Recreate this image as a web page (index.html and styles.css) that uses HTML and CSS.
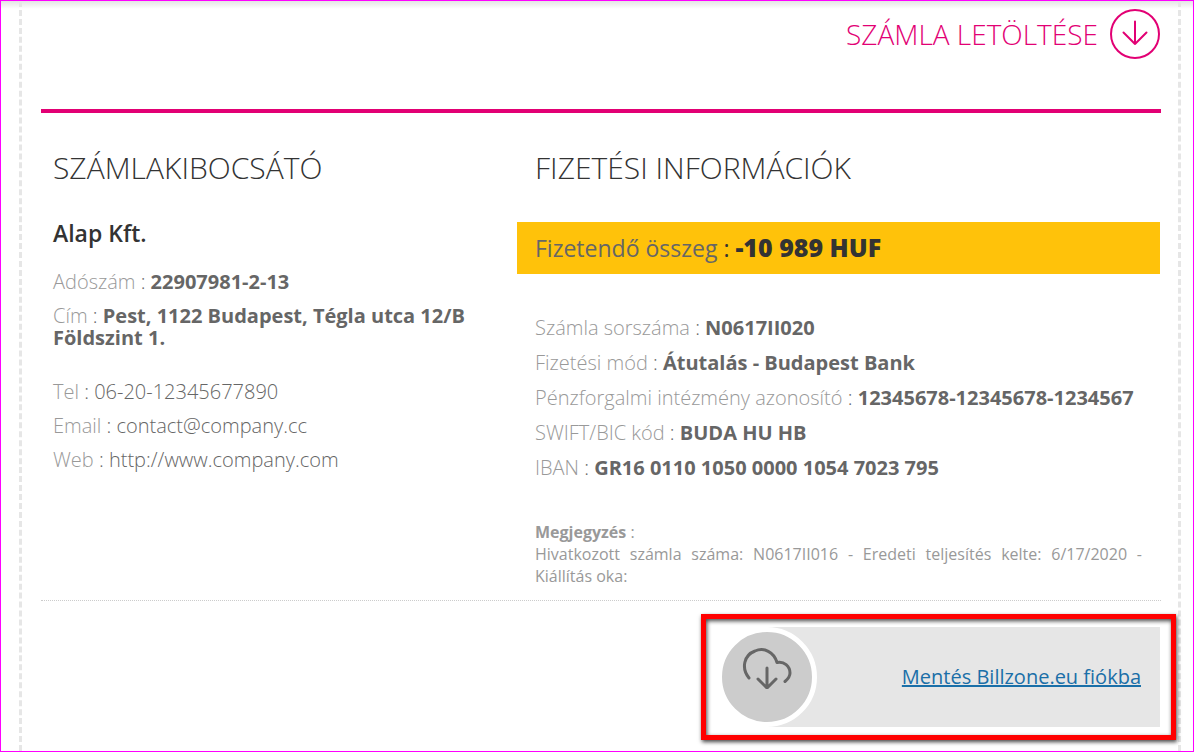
FILE: index.html
```
<!DOCTYPE html>
<html lang="hu">
<head>
  <meta charset="UTF-8">
  <meta name="viewport" content="width=device-width, initial-scale=1.0">
  <title>Számla</title>
  <link rel="stylesheet" href="styles.css">
</head>
<body>
  <div class="frame">
    <main class="sheet">
      <header class="download-bar">
        <a class="download-link" href="#letoltes">
          SZÁMLA LETÖLTÉSE
          <svg class="download-icon" viewBox="0 0 50 50" aria-hidden="true">
            <circle cx="25" cy="25" r="24"/>
            <path d="M25 12.500V35M13.500 23.500L25 35L36.500 23.500"/>
          </svg>
        </a>
      </header>

      <div class="columns">
        <section class="issuer">
          <h2>SZÁMLAKIBOCSÁTÓ</h2>
          <h3>Alap Kft.</h3>
          <ul class="data-list">
            <li><span>Adószám</span> : <b>22907981-2-13</b></li>
            <li><span>Cím</span> : <b>Pest, 1122 Budapest, Tégla utca 12/B Földszint 1.</b></li>
          </ul>
          <ul class="data-list contact">
            <li><span>Tel</span> : 06-20-12345677890</li>
            <li><span>Email</span> : contact@company.cc</li>
            <li><span>Web</span> : http://www.company.com</li>
          </ul>
        </section>

        <section class="payment">
          <h2>FIZETÉSI INFORMÁCIÓK</h2>
          <p class="amount"><span>Fizetendő összeg</span> : <b>-10 989 HUF</b></p>
          <ul class="data-list">
            <li><span>Számla sorszáma</span> : <b>N0617II020</b></li>
            <li><span>Fizetési mód</span> : <b>Átutalás - Budapest Bank</b></li>
            <li><span>Pénzforgalmi intézmény azonosító</span> : <b>12345678-12345678-1234567</b></li>
            <li><span>SWIFT/BIC kód</span> : <b>BUDA HU HB</b></li>
            <li><span>IBAN</span> : <b>GR16 0110 1050 0000 1054 7023 795</b></li>
          </ul>
          <div class="note">
            <b>Megjegyzés</b> :
            <p>Hivatkozott számla száma: N0617II016 - Eredeti teljesítés kelte: 6/17/2020 - Kiállítás oka:</p>
          </div>
        </section>
      </div>

      <footer class="save-bar">
        <div class="highlight">
          <div class="save-box">
            <div class="save-icon">
              <svg viewBox="0 0 50 42" aria-hidden="true">
                <path d="M7 31C-1 21 2 8 13 4C22 0 32 5 35 15.500C42 14 48 19 48 26C48 29 46 32 43 34.500M25 21V41M16 32L25 41L34 32"/>
              </svg>
            </div>
            <a href="#mentes">Mentés Billzone.eu fiókba</a>
          </div>
        </div>
      </footer>
    </main>
  </div>
</body>
</html>
```
FILE: styles.css
```
:root {
  --pink: #e20074;
  --yellow: #ffc20a;
  --dark: #333;
  --text: #666;
  --muted: #999;
}

* {
  box-sizing: border-box;
}

body {
  margin: 0;
  background-color: #fff;
  color: var(--text);
  font-family: "Open Sans", sans-serif;
  font-size: 20px;
  line-height: 22px;
}

h2, h3, p, ul {
  margin: 0;
  padding: 0;
}

.frame {
  display: flex;
  min-height: 100vh;
  padding: 0 12px 0 18px;
  border: 1px solid #f0f;
  background: linear-gradient(#e4e4e4, #fff 8px);
}

.sheet {
  flex: 1;
  padding: 0 17px 0 19px;
  border: dashed #e6e6e6;
  border-width: 0 3px;
}

/* Header */
.download-bar {
  display: flex;
  justify-content: flex-end;
  padding: 8px 0 50px;
  border-bottom: 4px solid var(--pink);
}

.download-link {
  display: flex;
  align-items: center;
  gap: 12px;
  padding-right: 1px;
  color: var(--pink);
  font-size: 28px;
  font-weight: 300;
  text-decoration: none;
}

.download-icon {
  width: 50px;
  height: 50px;
  fill: none;
  stroke: var(--pink);
  stroke-width: 2;
  stroke-linecap: round;
  stroke-linejoin: round;
}

/* Invoice data */
.columns {
  display: grid;
  grid-template-columns: 42.5% 1fr;
  padding: 35px 0 13px;
  border-bottom: 1px dotted #ccc;
}

h2 {
  margin-bottom: 28px;
  color: var(--dark);
  font-size: 30px;
  font-weight: 300;
  line-height: 40px;
}

h3 {
  margin-bottom: 20px;
  color: var(--dark);
  font-size: 23px;
  font-weight: 600;
  line-height: 35px;
}

.issuer {
  padding: 0 36px 0 12px;
}

.payment h2 {
  padding-left: 18px;
}

.data-list {
  display: flex;
  flex-direction: column;
  gap: 12px;
  list-style: none;
  font-weight: 300;
}

.data-list span {
  color: var(--muted);
}

.data-list b {
  font-weight: 700;
}

.contact {
  margin-top: 32px;
}

.amount {
  margin: 34px 1px 43px 0;
  padding: 0 18px;
  background-color: var(--yellow);
  color: var(--dark);
  font-size: 23px;
  line-height: 52px;
}

.amount span {
  color: var(--text);
}

.amount b {
  font-size: 25px;
  font-weight: 800;
  line-height: 22px;
}

.payment .data-list {
  gap: 13px;
  padding-left: 18px;
}

.note {
  padding: 42px 19px 0 18px;
  color: var(--muted);
  font-size: 16px;
  text-align: justify;
}

/* Save box */
.save-bar {
  display: flex;
  justify-content: flex-end;
  padding: 13px 0 10px;
}

.highlight {
  width: 475px;
  margin-right: -15px;
  padding: 8px 11px;
  border: 5px solid #f00;
  box-shadow: 1px 2px 4px #444, inset 1px 2px 4px #444;
  background-color: #fff;
}

.save-box {
  display: flex;
  align-items: center;
  justify-content: space-between;
  padding-right: 19px;
  background: linear-gradient(90deg, #fff 50px, #e6e6e6 50px);
}

.save-box a {
  color: #1a6fa8;
}

.save-icon {
  display: flex;
  align-items: center;
  justify-content: center;
  width: 100px;
  height: 100px;
  padding-bottom: 18px;
  border: 5px solid #fff;
  border-radius: 50%;
  background-color: #ccc;
}

.save-icon svg {
  width: 50px;
  height: 42px;
  fill: none;
  stroke: var(--text);
  stroke-width: 3;
  stroke-linecap: round;
  stroke-linejoin: round;
}
```
